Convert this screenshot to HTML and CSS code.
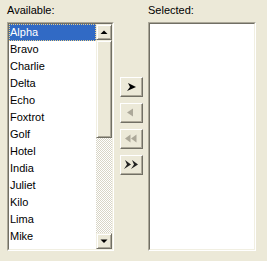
FILE: index.html
```html
<!DOCTYPE html>
<html lang="en">
<head>
    <meta charset="UTF-8">
    <title>List Chooser</title>
    <link rel="stylesheet" href="styles.css">
</head>
<body>
    <div class="chooser">
        <div class="column column-available">
            <div class="label">Available:</div>
            <div class="listbox">
                <div class="listbox-inner">
                    <ul class="items">
                        <li class="selected">Alpha</li>
                        <li>Bravo</li>
                        <li>Charlie</li>
                        <li>Delta</li>
                        <li>Echo</li>
                        <li>Foxtrot</li>
                        <li>Golf</li>
                        <li>Hotel</li>
                        <li>India</li>
                        <li>Juliet</li>
                        <li>Kilo</li>
                        <li>Lima</li>
                        <li>Mike</li>
                    </ul>
                    <div class="scrollbar">
                        <div class="scroll-btn">
                            <svg width="14" height="14" viewBox="0 0 14 14"><polygon points="3.5,9 10.5,9 7,5.5" fill="#000"/></svg>
                        </div>
                        <div class="thumb"></div>
                        <div class="track"></div>
                        <div class="scroll-btn">
                            <svg width="14" height="14" viewBox="0 0 14 14"><polygon points="3.5,5.5 10.5,5.5 7,9" fill="#000"/></svg>
                        </div>
                    </div>
                </div>
            </div>
        </div>

        <div class="mid">
            <button class="move-btn" title="Add">
                <svg width="21" height="18" viewBox="0 0 21 18"><polygon points="7,5 15,9 6,13 9,9" fill="#000"/></svg>
            </button>
            <button class="move-btn" title="Remove">
                <svg width="21" height="18" viewBox="0 0 21 18"><polygon points="12,4.5 12,12.5 6,8.5" fill="#ACA899"/></svg>
            </button>
            <button class="move-btn" title="Remove all">
                <svg width="21" height="18" viewBox="0 0 21 18"><polygon points="9.5,4.5 9.5,12.5 4,8.5" fill="#ACA899"/><polygon points="15.5,4.5 15.5,12.5 10,8.5" fill="#ACA899"/></svg>
            </button>
            <button class="move-btn" title="Add all">
                <svg width="21" height="18" viewBox="0 0 21 18"><polygon points="4,4 10,8.5 3,13 6,8.5" fill="#222"/><polygon points="11,4 17,8.5 10,13 13,8.5" fill="#222"/></svg>
            </button>
        </div>

        <div class="column column-selected">
            <div class="label">Selected:</div>
            <div class="listbox">
                <div class="listbox-inner"></div>
            </div>
        </div>
    </div>
</body>
</html>
```

FILE: styles.css
```css
body {
    margin: 0;
    background-color: #ECE9D8;
    color: #000;
    font-family: "Liberation Sans", Arial, sans-serif;
    font-size: 11px;
}

.chooser {
    display: flex;
    padding: 2px 0 0 7px;
}

.column {
    display: flex;
    flex-direction: column;
}

.column-available {
    width: 107px;
}

.column-selected {
    width: 108px;
}

.label {
    line-height: 17px;
    margin-bottom: 3px;
}

/* sunken two-tone frame */
.listbox {
    height: 229px;
    box-sizing: border-box;
    border: 1px solid;
    border-color: #ACA899 #fff #fff #ACA899;
}

.listbox-inner {
    display: flex;
    height: 100%;
    box-sizing: border-box;
    border: 1px solid;
    border-color: #716F64 #F1EFE2 #F1EFE2 #716F64;
    background-color: #fff;
}

.items {
    flex: 1;
    list-style: none;
    margin: 0;
    padding: 0;
    overflow: hidden;
}

.items li {
    height: 17px;
    box-sizing: border-box;
    line-height: 15px;
    border: 1px solid transparent;
    white-space: nowrap;
}

.items li.selected {
    background-color: #316AC5;
    color: #fff;
    border: 1px dotted #E8CF8C;
}

.scrollbar {
    display: flex;
    flex-direction: column;
    width: 16px;
}

.scroll-btn,
.thumb {
    box-sizing: border-box;
    background-color: #ECE9D8;
    border: 1px solid;
    border-color: #F1EFE2 #716F64 #716F64 #F1EFE2;
    box-shadow: inset 1px 1px #fff, inset -1px -1px #ACA899;
}

.scroll-btn {
    height: 16px;
}

.scroll-btn svg {
    display: block;
}

.thumb {
    height: 98px;
}

.track {
    flex: 1;
    background-color: #fff;
    background-image: conic-gradient(#fff 25%, #D8D5C6 0 50%, #fff 0 75%, #D8D5C6 0);
    background-size: 2px 2px;
}

.mid {
    display: flex;
    flex-direction: column;
    gap: 6px;
    width: 28px;
    padding: 75px 0 0 6px;
}

.move-btn {
    width: 23px;
    height: 20px;
    padding: 0;
    box-sizing: border-box;
    background-color: #ECE9D8;
    border: 1px solid;
    border-color: #fff #716F64 #716F64 #fff;
    box-shadow: inset -1px -1px #ACA899;
    cursor: pointer;
}

.move-btn svg {
    display: block;
}
```
